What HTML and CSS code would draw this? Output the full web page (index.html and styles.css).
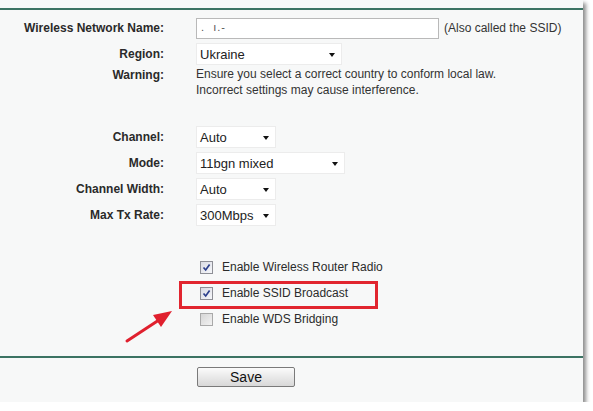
FILE: index.html
```html
<!DOCTYPE html>
<html>
<head>
<meta charset="utf-8">
<link rel="stylesheet" href="styles.css">
</head>
<body>
<div class="panel">
  <div class="rule"></div>
  <div class="form">
    <div class="row">
      <div class="label">Wireless Network Name:</div>
      <div class="ctrl"><span class="textbox"><span class="blur">.&nbsp;&nbsp;ı.-</span></span><span class="note">(Also called the SSID)</span></div>
    </div>
    <div class="row">
      <div class="label">Region:</div>
      <div class="ctrl"><span class="select w146">Ukraine<i class="caret"></i></span></div>
    </div>
    <div class="row warn">
      <div class="label">Warning:</div>
      <div class="ctrl text">Ensure you select a correct country to conform local law.<br>Incorrect settings may cause interference.</div>
    </div>
    <div class="spacer s26"></div>
    <div class="row">
      <div class="label">Channel:</div>
      <div class="ctrl"><span class="select w80">Auto<i class="caret"></i></span></div>
    </div>
    <div class="row">
      <div class="label">Mode:</div>
      <div class="ctrl"><span class="select w149">11bgn mixed<i class="caret"></i></span></div>
    </div>
    <div class="row">
      <div class="label">Channel Width:</div>
      <div class="ctrl"><span class="select w80">Auto<i class="caret"></i></span></div>
    </div>
    <div class="row">
      <div class="label">Max Tx Rate:</div>
      <div class="ctrl"><span class="select w80">300Mbps<i class="caret"></i></span></div>
    </div>
    <div class="spacer s26"></div>
    <div class="row">
      <div class="label"></div>
      <div class="ctrl"><span class="check on"><svg viewBox="0 0 9 9" width="9" height="9"><path d="M1.5 4.5 L3.7 7 L7.6 1.6" fill="none" stroke="#2c3f8c" stroke-width="1.7"/></svg></span><span class="cbtext">Enable Wireless Router Radio</span></div>
    </div>
    <div class="row">
      <div class="label"></div>
      <div class="ctrl"><span class="check on"><svg viewBox="0 0 9 9" width="9" height="9"><path d="M1.5 4.5 L3.7 7 L7.6 1.6" fill="none" stroke="#2c3f8c" stroke-width="1.7"/></svg></span><span class="cbtext">Enable SSID Broadcast</span></div>
    </div>
    <div class="row">
      <div class="label"></div>
      <div class="ctrl"><span class="check off"></span><span class="cbtext">Enable WDS Bridging</span></div>
    </div>
  </div>
  <div class="rule bottom"></div>
  <div class="actions"><button class="save">Save</button></div>

  <div class="highlight"></div>
  <svg class="arrow" width="593" height="411" viewBox="0 0 593 411">
    <line x1="127" y1="341" x2="162" y2="318" stroke="#e0202e" stroke-width="3" stroke-linecap="round"/>
    <polygon points="172,311 153,315 161,327" fill="#e0202e"/>
  </svg>
</div>
</body>
</html>
```

FILE: styles.css
```css
html, body {
  margin: 0;
  padding: 0;
  background: #ffffff;
}
body {
  font-family: "Liberation Sans", Arial, sans-serif;
  font-size: 12px;
  color: #2b2b2b;
}
.panel {
  position: relative;
  width: 583px;
  height: 402px;
  box-sizing: border-box;
  padding-top: 8px;
  background: #f7f8f8;
  box-shadow: 3px 3px 4px rgba(0, 0, 0, 0.45);
}
.rule {
  height: 2px;
  background: #3b7363;
}
.form {
  margin-top: 5px;
  display: flex;
  flex-direction: column;
}
.row {
  display: flex;
  align-items: center;
  height: 26px;
}
.row.warn {
  height: auto;
  align-items: flex-start;
  padding-top: 1px;
}
.label {
  width: 164px;
  flex: none;
  text-align: right;
  font-weight: bold;
  color: #2a2a2a;
}
.ctrl {
  margin-left: 32px;
  display: flex;
  align-items: center;
}
.ctrl.text {
  display: block;
  line-height: 16px;
  color: #333;
  margin-top: -2px;
}
.spacer.s26 { height: 26px; }
.textbox {
  position: relative;
  display: inline-block;
  width: 243px;
  height: 21px;
  box-sizing: border-box;
  border: 1px solid #b9b9b9;
  background: #ffffff;
}
.blur {
  position: absolute;
  left: 4px;
  top: 2px;
  font-size: 11px;
  color: #555;
  letter-spacing: 1px;
}
.note {
  margin-left: 5px;
  color: #333;
}
.select {
  position: relative;
  display: inline-block;
  height: 22px;
  line-height: 21px;
  box-sizing: border-box;
  padding-left: 3px;
  font-size: 13px;
  color: #222;
  background: #ffffff;
  border: 1px solid #ececec;
}
.w146 { width: 146px; }
.w80 { width: 80px; }
.w149 { width: 149px; }
.caret {
  position: absolute;
  right: 6px;
  top: 9px;
  width: 0;
  height: 0;
  border-left: 3.5px solid transparent;
  border-right: 3.5px solid transparent;
  border-top: 4px solid #111;
}
.check {
  display: inline-flex;
  align-items: center;
  justify-content: center;
  width: 13px;
  height: 13px;
  box-sizing: border-box;
  margin-left: 4px;
  border: 1px solid #8e8f96;
  background: linear-gradient(135deg, #d9dbe3, #f6f7fa);
}
.check.off {
  border-color: #a9a9a9;
  background: linear-gradient(135deg, #d6d6d6, #f2f2f2);
}
.cbtext {
  margin-left: 9px;
  color: #2b2b2b;
}
.rule.bottom {
  margin-top: 24px;
}
.actions {
  padding-top: 9px;
  padding-left: 197px;
}
.save {
  width: 98px;
  height: 20px;
  padding: 0;
  font-family: "Liberation Sans", Arial, sans-serif;
  font-size: 14px;
  color: #111;
  border: 1px solid #7a7a7a;
  border-radius: 2px;
  background: linear-gradient(#fbfbfb, #e9e9e9 50%, #d8d8d8);
}
.highlight {
  position: absolute;
  left: 179px;
  top: 281px;
  width: 199px;
  height: 28px;
  box-sizing: border-box;
  border: 3px solid #e1252f;
}
.arrow {
  position: absolute;
  left: 0;
  top: 0;
  pointer-events: none;
}
```
